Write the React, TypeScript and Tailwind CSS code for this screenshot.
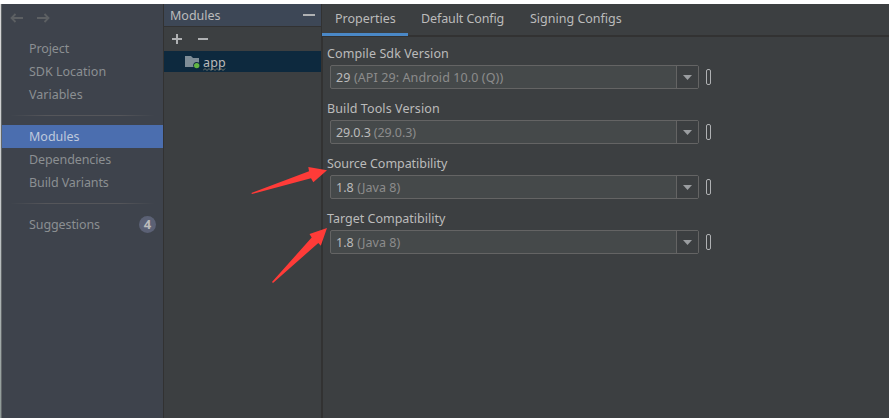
import React from "react";

const font = "font-['Noto_Sans',sans-serif]";

function NavItem({ label, active, spacing }: { label: string; active?: boolean; spacing: string }) {
  return (
    <div
      className={`flex h-[23px] items-center whitespace-nowrap pl-[27px] ${spacing} ${
        active ? "bg-[#4b6eaf] text-[#bfc9dc]" : "text-[#8b8f92]"
      }`}
    >
      {label}
    </div>
  );
}

function Separator() {
  return (
    <div className="mx-2 flex h-px">
      <div className="w-9 bg-linear-to-r from-transparent to-[#55565a]" />
      <div className="flex-1 bg-[#55565a]" />
      <div className="w-9 bg-linear-to-r from-[#55565a] to-transparent" />
    </div>
  );
}

function Field({ label, value, hint, labelSpacing, valueSpacing }: {
  label: string; value: string; hint: string; labelSpacing: string; valueSpacing: string;
}) {
  return (
    <div className="h-[55px]">
      <div className={`flex h-[21px] items-center whitespace-nowrap pb-0.5 pl-1 text-[#bbbbbb] ${labelSpacing}`}>{label}</div>
      <div className="flex items-center pl-[7px]">
        <div className="flex h-6 w-[369px] rounded-[2px] border border-[#646464] bg-[#45494a]">
          <div className={`flex flex-1 items-center whitespace-pre pl-[5px] text-[#bbbbbb] ${valueSpacing}`}>
            {value} <span className="text-[#8c8c8c]">{hint}</span>
          </div>
          <div className="flex w-[22px] items-center justify-center border-l border-[#646464] bg-[#3c3f41]">
            <svg width="9" height="5" viewBox="0 0 9 5"><path d="M0 0H9L4.5 5Z" fill="#9a9da0" /></svg>
          </div>
        </div>
        <div className="ml-[7px] h-4 w-[5px] rounded-[2px] border border-[#afb1b3]" />
      </div>
    </div>
  );
}

export default function App() {
  return (
    <div className={`relative h-[418px] w-[889px] overflow-hidden bg-[#3c3f41] text-[12.5px] leading-[17px] ${font}`}>
      <div className="h-1 bg-white" />
      <div className="flex h-[414px]">
        <div className="w-0.5 shrink-0 border-r border-[#62676a] bg-linear-to-b from-[#d8d8d8] via-[#c4c8ca] to-[#8e9996]" />
        <aside className="w-[161px] shrink-0 bg-[#3e434c]">
          <div className="flex h-[33px] gap-3.5 pl-2 pt-[9px]">
            <svg width="13" height="10" viewBox="0 0 13 10" fill="none" stroke="#5d6063" strokeWidth="1.8"><path d="M13 5H1.5M5.5 1L1.5 5L5.5 9" /></svg>
            <svg width="13" height="10" viewBox="0 0 13 10" fill="none" stroke="#5d6063" strokeWidth="1.8"><path d="M0 5H11.5M7.5 1L11.5 5L7.5 9" /></svg>
          </div>
          <NavItem label="Project" spacing="tracking-[-0.1px]" />
          <NavItem label="SDK Location" spacing="tracking-[0px]" />
          <NavItem label="Variables" spacing="tracking-[0px]" />
          <div className="flex h-[19px] flex-col justify-center"><Separator /></div>
          <NavItem label="Modules" active spacing="tracking-[0px]" />
          <NavItem label="Dependencies" spacing="tracking-[-0.1px]" />
          <NavItem label="Build Variants" spacing="tracking-[-0.1px]" />
          <div className="flex h-[19px] flex-col justify-center"><Separator /></div>
          <div className="flex items-center justify-between pr-[7px]">
            <NavItem label="Suggestions" spacing="tracking-[-0.1px]" />
            <span className="flex size-[17px] items-center justify-center rounded-full bg-[#5b6175] text-[13px] font-bold text-[#bbbbbb]">4</span>
          </div>
        </aside>
        <section className="w-[159px] shrink-0 border-x border-[#323232]">
          <header className="flex h-[23px] items-center justify-between border-b border-[#323232] bg-[#3d4756] pl-1.5 pr-1.5 text-[#bbbbbb]">
            <span>Modules</span>
            <span className="h-0.5 w-3 bg-[#afb1b3]" />
          </header>
          <div className="flex h-6 items-center gap-[15px] pl-2">
            <svg width="11" height="11" viewBox="0 0 11 11" fill="#afb1b3"><path d="M4 0H6V4H10V6H6V10H4V6H0V4H4Z" /></svg>
            <span className="h-0.5 w-2.5 bg-[#afb1b3]" />
          </div>
          <div className="flex h-[21px] items-center bg-[#0d293e] pl-[21px] text-[#bbbbbb]">
            <svg className="mt-0.5" width="15" height="13" viewBox="0 0 15 13"><path d="M0 0H6L8 2H14V11H0Z" fill="#7e8d97" /><circle cx="11.7" cy="9.6" r="3.5" fill="#0d293e" /><circle cx="11.7" cy="9.6" r="2.7" fill="#62b543" /></svg>
            <span className="relative ml-[3px] mt-0.5 tracking-[0.2px]">app
              <svg className="absolute left-0 top-3.5" width="23" height="3" viewBox="0 0 23 3" fill="none" stroke="#8c8c7c" strokeWidth="0.8"><path d="M0 2.5L2 .5L4 2.5L6 .5L8 2.5L10 .5L12 2.5L14 .5L16 2.5L18 .5L20 2.5L22 .5" /></svg>
            </span>
          </div>
        </section>
        <main className="flex min-w-0 flex-1 flex-col">
          <nav className="flex h-[33px] border-b-2 border-[#323232] text-[#bbbbbb]">
            <div className="h-8 w-[86px] border-b-3 border-[#4a88c7] pl-[13px] pt-1.5">Properties</div>
            <div className="w-[109px] pl-[13px] pt-1.5 tracking-[-0.1px]">Default Config</div>
            <div className="pl-[13px] pt-1.5">Signing Configs</div>
          </nav>
          <div className="flex-1 border-l border-[#323232] pt-[7px]">
            <Field label="Compile Sdk Version" value="29" hint="(API 29: Android 10.0 (Q))" labelSpacing="tracking-[0.1px]" valueSpacing="tracking-[0.1px]" />
            <Field label="Build Tools Version" value="29.0.3" hint="(29.0.3)" labelSpacing="tracking-[0.1px]" valueSpacing="tracking-[-0.1px]" />
            <Field label="Source Compatibility" value="1.8" hint="(Java 8)" labelSpacing="tracking-[-0.05px]" valueSpacing="tracking-[0.05px]" />
            <Field label="Target Compatibility" value="1.8" hint="(Java 8)" labelSpacing="tracking-[0px]" valueSpacing="tracking-[0.05px]" />
          </div>
        </main>
      </div>
      <svg className="absolute left-0 top-0" width="889" height="418" viewBox="0 0 889 418" fill="#ff3b38">
        <path d="M251.3 193L309 171.3L308.3 167L327 170.3L313.3 182.3L311 178.3L252 194Z" />
        <path d="M272 282L311.7 237.5L309.5 234L327 228L320.8 245.8L318.3 243L273 283Z" />
      </svg>
    </div>
  );
}
